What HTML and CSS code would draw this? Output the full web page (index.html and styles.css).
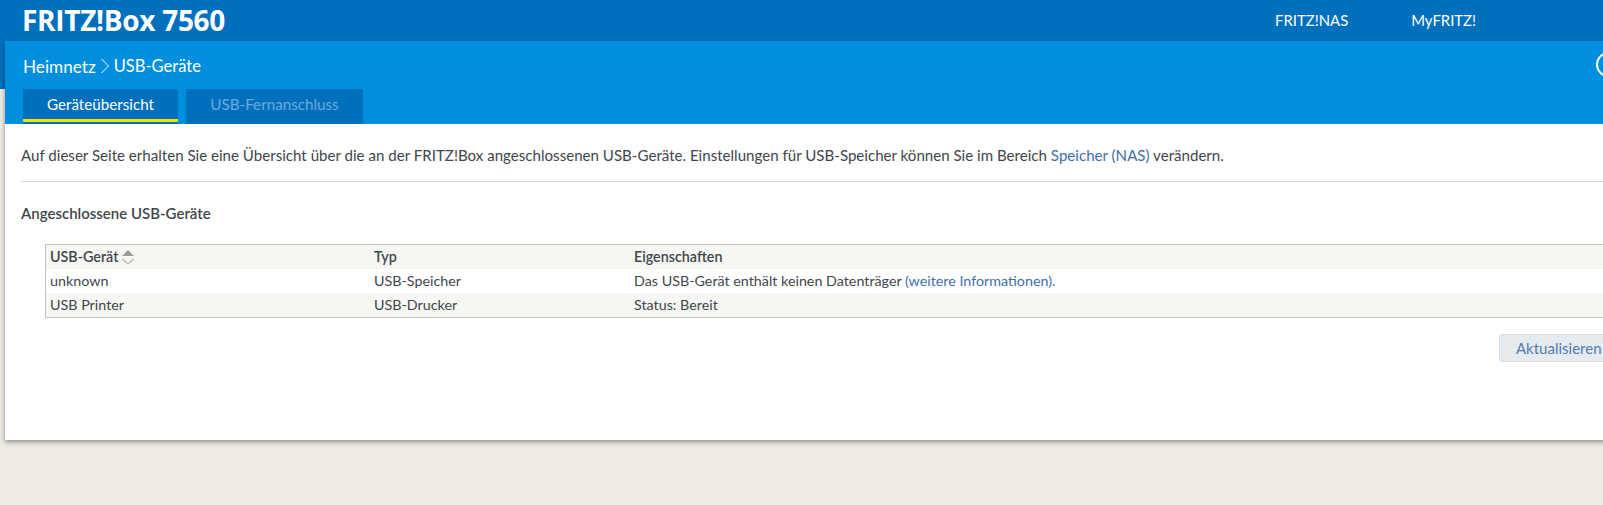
FILE: index.html
```html
<!DOCTYPE html>
<html lang="de">
<head>
<meta charset="utf-8">
<title>FRITZ!Box 7560</title>
<link rel="stylesheet" href="styles.css">
</head>
<body>
<div class="page">
  <header class="topbar">
    <div class="brand">FRITZ!Box 7560</div>
    <nav class="toplinks"><a>FRITZ!NAS</a><a>MyFRITZ!</a></nav>
  </header>
  <div class="panel">
    <div class="headblock">
      <div class="crumbs">
        <span>Heimnetz</span>
        <svg class="chev" width="10" height="16" viewBox="0 0 10 16"><path d="M1.5 1 L8.5 8 L1.5 15" fill="none" stroke="#fff" stroke-width="1"/></svg>
        <span class="crumb-last">USB-Geräte</span>
      </div>
      <div class="help"></div>
      <div class="tabs">
        <a class="tab active">Geräteübersicht</a>
        <a class="tab inactive">USB-Fernanschluss</a>
      </div>
    </div>
    <main class="content">
      <p class="intro">Auf dieser Seite erhalten Sie eine Übersicht über die an der FRITZ!Box angeschlossenen USB-Geräte. Einstellungen für USB-Speicher können Sie im Bereich <a class="link">Speicher (NAS)</a> verändern.</p>
      <hr class="rule">
      <h2 class="title">Angeschlossene USB-Geräte</h2>
      <div class="table">
        <div class="row head">
          <div class="c1">USB-Gerät <svg class="sort" width="14" height="16" viewBox="0 0 14 16"><path d="M7 1 L13 7 H1 Z" fill="#9b9b98"/><path d="M1.5 10 L7 15 L12.5 10" fill="none" stroke="#b5b5b2" stroke-width="1.2"/></svg></div>
          <div class="c2">Typ</div>
          <div class="c3">Eigenschaften</div>
        </div>
        <div class="row">
          <div class="c1">unknown</div>
          <div class="c2">USB-Speicher</div>
          <div class="c3">Das USB-Gerät enthält keinen Datenträger <a class="link">(weitere Informationen).</a></div>
        </div>
        <div class="row alt">
          <div class="c1">USB Printer</div>
          <div class="c2">USB-Drucker</div>
          <div class="c3">Status: Bereit</div>
        </div>
      </div>
      <div class="actions"><button class="btn">Aktualisieren</button></div>
    </main>
  </div>
</div>
</body>
</html>
```
FILE: styles.css
```css
* { box-sizing: border-box; }
html, body { margin: 0; padding: 0; }
body {
  width: 1603px;
  height: 505px;
  overflow: hidden;
  background: #eeebe5;
  font-family: "Lato", "Noto Sans", sans-serif;
  font-size: 14.3px;
  color: #3f464c;
}
.page { width: 1603px; height: 505px; overflow: hidden; position: relative; }
.topbar {
  height: 89px;
  background: #0070bd;
  display: flex;
  justify-content: space-between;
  padding: 0 0 0 22px;
  color: #fff;
}
.brand {
  font-family: "Open Sans", sans-serif;
  font-size: 28px;
  font-weight: 700;
  line-height: 40px;
  letter-spacing: -0.3px;
}
.toplinks {
  display: flex;
  gap: 63px;
  width: 328px;
  font-size: 14.9px;
  line-height: 40px;
}
.panel {
  margin: -48px 0 0 5px;
  width: 1640px;
  height: 399px;
  box-shadow: 0 2px 5px rgba(0,0,0,.4);
  background: #fff;
}
.headblock { position: relative; height: 83px; background: #008fdf; padding: 0 0 0 18px; color: #fff; }
.crumbs { display: flex; align-items: center; gap: 4px; height: 48px; padding-top: 2px; font-size: 17.2px; }
.crumb-last { font-size: 16.5px; }
.chev { display: block; }
.help {
  position: absolute;
  left: 1590.5px;
  top: 11px;
  width: 25px;
  height: 25px;
  border: 2px solid #fff;
  border-radius: 50%;
}
.tabs { display: flex; gap: 8px; }
.tab {
  display: block;
  height: 35px;
  background: #0070bd;
  font-size: 15.2px;
  line-height: 30px;
  text-align: center;
}
.active { width: 155px; position: relative; }
.active::after { content: ""; position: absolute; left: 0; right: 0; top: 30px; height: 3px; background: #f5e600; }
.inactive { width: 177px; color: #6fa9d9; }
.content { padding: 0 0 0 16px; }
.intro { margin: 0; padding-top: 21px; line-height: 20px; height: 57px; font-size: 15.1px; }
.link { color: #3f6fa8; }
.rule { margin: 0; width: 1630px; border: 0; border-top: 1px solid #d6d6d3; }
.title { margin: 0; padding-top: 21px; height: 62px; font-size: 15px; font-weight: 600; line-height: 20px; }
.table {
  margin-left: 24px;
  width: 1600px;
  border: 1px solid #c4c3bb;
  border-right: 0;
}
.row { display: flex; height: 24px; line-height: 24px; padding-left: 4px; }
.head { background: #f6f6f3; font-weight: 600; }
.alt { background: #f6f6f3; }
.c1 { width: 324px; display: flex; align-items: center; gap: 3px; }
.c2 { width: 260px; }
.sort { display: block; }
.actions { padding: 16px 0 0 1478px; }
.btn {
  display: block;
  width: 130px;
  height: 28px;
  padding: 0 0 0 16px;
  text-align: left;
  background: #e6ebef;
  border: 1px solid #d8dfe4;
  border-radius: 3px;
  color: #4f7cb0;
  font: inherit;
  font-size: 15px;
}
```
